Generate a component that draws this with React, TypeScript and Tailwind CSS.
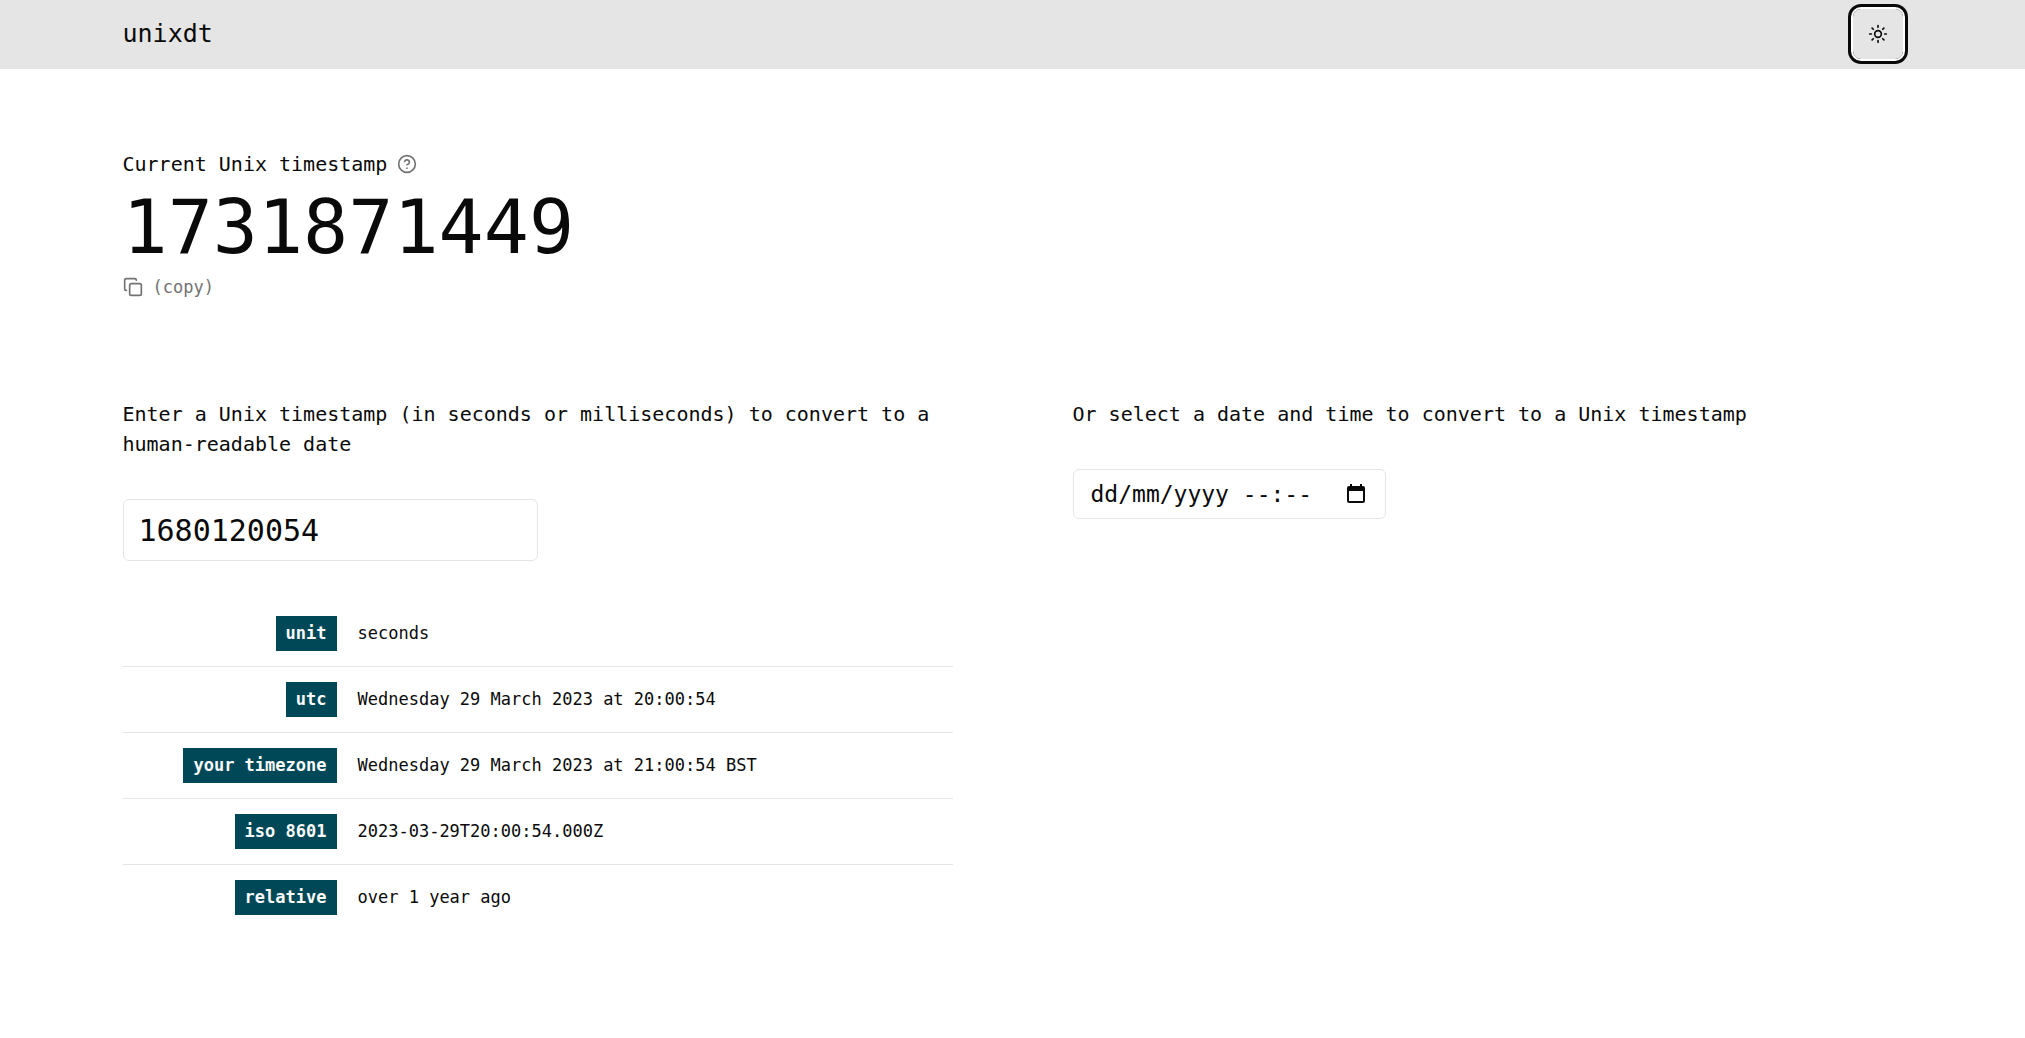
import { CircleHelp, Copy, Sun } from "lucide-react";

const rows = [
  { label: "unit", value: "seconds" },
  { label: "utc", value: "Wednesday 29 March 2023 at 20:00:54" },
  { label: "your timezone", value: "Wednesday 29 March 2023 at 21:00:54 BST" },
  { label: "iso 8601", value: "2023-03-29T20:00:54.000Z" },
  { label: "relative", value: "over 1 year ago" },
];

function CalendarIcon() {
  return (
    <svg viewBox="0 0 18 20" className="h-5 w-[18px]" fill="currentColor" aria-hidden="true">
      <path
        fillRule="evenodd"
        d="M3 0h2v2h8V0h2v2h1a2 2 0 0 1 2 2v13a2 2 0 0 1-2 2H2a2 2 0 0 1-2-2V4a2 2 0 0 1 2-2h1zM2 7v10h14V7z"
      />
    </svg>
  );
}

function Header() {
  return (
    <header className="border-b border-neutral-200 bg-neutral-200">
      <div className="mx-auto flex h-17 max-w-[1920px] items-center justify-between px-[70px]">
        <a href="#" className="text-[25px] font-medium">
          unixdt
        </a>
        <button
          type="button"
          aria-label="Toggle theme"
          className="flex size-[50px] items-center justify-center rounded-lg ring-[3px] ring-neutral-950 ring-offset-2 ring-offset-white"
        >
          <Sun className="size-5" />
        </button>
      </div>
    </header>
  );
}

function CurrentTimestamp() {
  return (
    <section>
      <h2 className="flex items-center gap-[10px]">
        Current Unix timestamp
        <button type="button" aria-label="What is a Unix timestamp?" className="text-neutral-500">
          <CircleHelp className="size-5" />
        </button>
      </h2>
      <p className="mt-[11px] text-[75px] leading-[75px]">1731871449</p>
      <button type="button" className="mt-[7px] flex items-center gap-[10px] text-[17px] leading-[30px] text-neutral-500">
        <Copy className="size-5" />
        (copy)
      </button>
    </section>
  );
}

function Results() {
  return (
    <table className="mt-10 w-full text-[17px] leading-[25px]">
      <tbody className="divide-y divide-neutral-200">
        {rows.map((row) => (
          <tr key={row.label}>
            <th scope="row" className="w-[214px] py-[15px] text-right font-bold">
              <span className="inline-block bg-[#004857] px-[10px] py-[5px] align-top text-neutral-50">{row.label}</span>
            </th>
            <td className="pl-[21px]">{row.value}</td>
          </tr>
        ))}
      </tbody>
    </table>
  );
}

export default function App() {
  return (
    <div className="min-h-screen bg-white font-['DejaVu_Sans_Mono',monospace] text-[20px] leading-[30px] text-neutral-950">
      <Header />
      <main className="mx-auto max-w-[1920px] px-[70px] py-20">
        <CurrentTimestamp />
        <div className="mt-[97px] grid grid-cols-2 gap-[120px]">
          <section>
            <label htmlFor="timestamp" className="block">
              Enter a Unix timestamp (in seconds or milliseconds) to convert to a human-readable date
            </label>
            <input
              id="timestamp"
              type="text"
              defaultValue="1680120054"
              className="mt-10 block h-[62px] w-1/2 rounded-md border border-neutral-200 px-[15px] text-[30px]"
            />
            <Results />
          </section>
          <section>
            <label htmlFor="datetime" className="block">
              Or select a date and time to convert to a Unix timestamp
            </label>
            <div className="mt-10 flex h-[50px] w-[313px] items-center justify-between rounded-md border border-neutral-200 pr-5 pl-[17px]">
              <input
                id="datetime"
                type="text"
                placeholder="dd/mm/yyyy --:--"
                className="w-[240px] text-[23px] placeholder:text-neutral-950 placeholder:opacity-100"
              />
              <button type="button" aria-label="Open calendar">
                <CalendarIcon />
              </button>
            </div>
          </section>
        </div>
      </main>
    </div>
  );
}
